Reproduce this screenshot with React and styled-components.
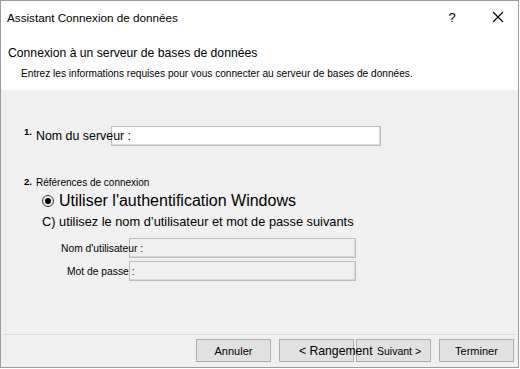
import React from 'react';
import styled, { createGlobalStyle } from 'styled-components';

const GlobalStyle = createGlobalStyle`
  body {
    margin: 0;
    background: #ffffff;
    font-family: "Liberation Sans", Arial, sans-serif;
    color: #000000;
  }
`

const Window = styled.div`
  width: 519px;
  height: 368px;
  box-sizing: border-box;
  border: 1px solid #9c9c9c;
  display: flex;
  flex-direction: column;
  background: #f0f0f0;
`

const Header = styled.div`
  background: #ffffff;
  height: 89px;
  display: flex;
  flex-direction: column;
`

const TitleBar = styled.div`
  display: flex;
  align-items: center;
  height: 32px;
  padding-left: 6px;
`

const TitleText = styled.div`
  font-size: 11.7px;
  flex: 1;
`

const TitleButton = styled.div`
  width: ${p => p.$width}px;
  height: 32px;
  display: flex;
  align-items: center;
  justify-content: center;
  font-size: 13px;
`

const PageTitle = styled.div`
  font-size: 12.2px;
  padding: 12px 0 0 7px;
  line-height: 16px;
`

const PageSub = styled.div`
  font-size: 10.15px;
  padding: 6px 0 0 20px;
  line-height: 14px;
`

const Body = styled.div`
  flex: 1;
  display: flex;
  flex-direction: column;
  padding: 36px 0 0 23px;
`

const Step = styled.div`
  display: flex;
  align-items: center;
  margin-top: ${p => p.$top || 0}px;
`

const StepNum = styled.span`
  font-size: 9.5px;
  font-weight: bold;
  width: 12px;
  align-self: flex-start;
  line-height: 12px;
`

const Label = styled.span`
  position: relative;
  z-index: 1;
  font-size: ${p => p.$size || 12.4}px;
  white-space: nowrap;
`

const TextBox = styled.div`
  width: ${p => p.$width}px;
  height: 20px;
  box-sizing: border-box;
  margin-left: ${p => p.$overlap ? -p.$overlap : 0}px;
  background: ${p => p.$disabled ? '#f0f0f0' : '#ffffff'};
  border: 1px solid #bcbcbc;
  box-shadow: inset -1px -1px 0 #d8d8d8;
`

const RadioRow = styled.div`
  display: flex;
  align-items: center;
  gap: 5px;
  margin: 4px 0 0 18px;
  font-size: 16px;
`

const RadioCircle = styled.span`
  width: 12px;
  height: 12px;
  box-sizing: border-box;
  border: 1px solid #333333;
  border-radius: 50%;
  display: flex;
  align-items: center;
  justify-content: center;
  &::after {
    content: '';
    width: 6px;
    height: 6px;
    border-radius: 50%;
    background: #000000;
  }
`

const OptionText = styled.div`
  font-size: 12.8px;
  margin: 4px 0 0 18px;
`

const Credentials = styled.div`
  display: flex;
  flex-direction: column;
  gap: 3px;
  margin-top: 9px;
`

const CredRow = styled.div`
  display: flex;
  align-items: center;
  padding-left: ${p => p.$indent}px;
`

const Footer = styled.div`
  margin: auto 3px 0 3px;
  border-top: 1px solid #dadada;
  height: 33px;
  box-sizing: border-box;
  display: flex;
  justify-content: flex-end;
  align-items: flex-start;
  padding: 4px 1px 0 0;
  gap: 8px;
`

const Button = styled.div`
  position: relative;
  z-index: ${p => p.$front ? 1 : 0};
  width: 75px;
  height: 23px;
  box-sizing: border-box;
  background: #e1e1e1;
  border: 1px solid #adadad;
  display: flex;
  align-items: center;
  justify-content: ${p => p.$align || 'center'};
  padding-left: ${p => p.$pad || 0}px;
  font-size: ${p => p.$size || 11}px;
  white-space: nowrap;
  margin-left: ${p => p.$pull ? -p.$pull : 0}px;
`

export default function App() {
  return (
    <>
      <GlobalStyle />
      <Window>
        <Header>
          <TitleBar>
            <TitleText>Assistant Connexion de données</TitleText>
            <TitleButton $width={52}>?</TitleButton>
            <TitleButton $width={40}>
              <svg width="12" height="12" viewBox="0 0 12 12">
                <path d="M1 1 L11 11 M11 1 L1 11" stroke="#000" strokeWidth="1.1" fill="none" />
              </svg>
            </TitleButton>
          </TitleBar>
          <PageTitle>Connexion à un serveur de bases de données</PageTitle>
          <PageSub>Entrez les informations requises pour vous connecter au serveur de bases de données.</PageSub>
        </Header>

        <Body>
          <Step>
            <StepNum>1.</StepNum>
            <Label>Nom du serveur :</Label>
            <TextBox $width={270} $overlap={20} />
          </Step>

          <Step $top={30}>
            <StepNum>2.</StepNum>
            <Label $size={10}>Références de connexion</Label>
          </Step>

          <RadioRow>
            <RadioCircle />
            <span>Utiliser l'authentification Windows</span>
          </RadioRow>
          <OptionText>C) utilisez le nom d’utilisateur et mot de passe suivants</OptionText>

          <Credentials>
            <CredRow $indent={37}>
              <Label $size={10.3}>Nom d'utilisateur :</Label>
              <TextBox $width={227} $overlap={14} $disabled />
            </CredRow>
            <CredRow $indent={43}>
              <Label $size={10.3}>Mot de passe :</Label>
              <TextBox $width={227} $overlap={6} $disabled />
            </CredRow>
          </Credentials>
        </Body>

        <Footer>
          <Button>Annuler</Button>
          <Button $front $size={12.2} $align="flex-start" $pad={19}>&lt; Rangement</Button>
          <Button $pull={6} $size={10.5} $align="flex-start" $pad={20}>Suivant &gt;</Button>
          <Button>Terminer</Button>
        </Footer>
      </Window>
    </>
  )
}
